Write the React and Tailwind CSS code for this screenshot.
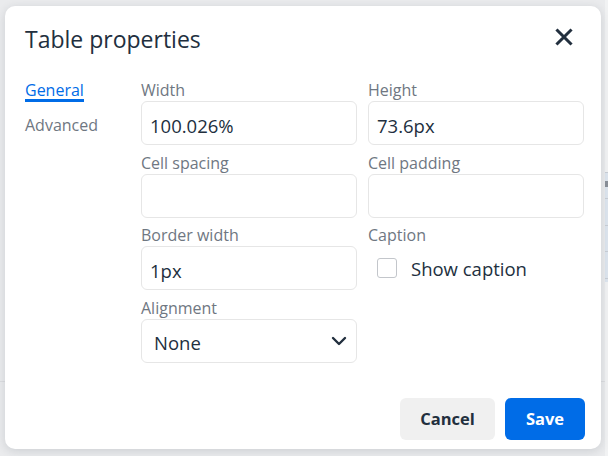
import React from 'react'

// Table properties dialog (TinyMCE-style) over a dimmed editor page.

const FONT = { fontFamily: '"Open Sans", "Noto Sans", Arial, sans-serif' }

function Field({ label, value }) {
  return (
    <div className="flex flex-col">
      <label className="text-[16px] leading-[21px] text-[#6f7782]">{label}</label>
      <div className="h-[44px] rounded-[6px] border border-[#e6e6e6] bg-white pl-[8px] pt-[5px] flex items-center text-[18.5px] text-[#222f3e]">
        {value}
      </div>
    </div>
  )
}

function CloseIcon() {
  return (
    <svg width="24" height="24" viewBox="0 0 24 24" fill="none">
      <path d="M5.5 5.5 18.5 18.5M18.5 5.5 5.5 18.5" stroke="#222f3e" strokeWidth="3" strokeLinecap="square" />
    </svg>
  )
}

function Chevron() {
  return (
    <svg width="16" height="10" viewBox="0 0 16 10" fill="none">
      <path d="M2 2 8 8 14 2" stroke="#222f3e" strokeWidth="2.4" strokeLinecap="round" strokeLinejoin="round" />
    </svg>
  )
}

function Backdrop() {
  // faint editor content peeking out behind the modal
  return (
    <div className="w-full h-full flex">
      <div className="w-[605px] h-full flex flex-col">
        <div className="h-[381px]" />
        <div className="h-px bg-[#dcdde0]" />
      </div>
      <div className="w-[3px] h-full flex flex-col bg-[#f1f2f3]">
        <div className="h-[172px]" />
        <div className="h-[110px] bg-[#dde5ee] flex flex-col">
          <div className="h-px bg-[#c9ced5]" />
          <div className="h-[8px]" />
          <div className="h-[6px] bg-[#8a9099]" />
          <div className="h-[11px]" />
          <div className="h-px bg-[#c9ced5]" />
          <div className="h-[26px]" />
          <div className="h-px bg-[#c9ced5]" />
          <div className="h-[25px]" />
          <div className="h-px bg-[#c9ced5]" />
          <div className="h-[26px]" />
          <div className="h-px bg-[#c9ced5]" />
        </div>
      </div>
    </div>
  )
}

export default function App() {
  return (
    <div className="relative w-[608px] h-[456px] overflow-hidden bg-[#eaebed]" style={FONT}>
      <Backdrop />

      <div className="absolute left-[5px] top-[6px] w-[596px] h-[443px] bg-white rounded-[10px] shadow-[0_2px_10px_rgba(34,47,62,0.15)] flex flex-col">
        {/* Header */}
        <div className="flex items-start justify-between pt-[18px] pl-5 pr-[25px]">
          <h1 className="text-[23px] leading-[30px] text-[#222f3e] font-normal">Table properties</h1>
          <button className="mt-px w-6 h-6 flex items-center justify-center">
            <CloseIcon />
          </button>
        </div>

        {/* Body */}
        <div className="flex pt-[26px] pl-5 pr-[17px]">
          <div className="w-[116px] flex flex-col items-start">
            <div className="mt-[0.5px] text-[16px] leading-[18px] text-[#006ce7] border-b-[3px] border-[#006ce7]">
              General
            </div>
            <div className="mt-[13px] text-[16px] leading-[21px] text-[#6f7782]">Advanced</div>
          </div>

          <div className="grid grid-cols-[216px_216px] gap-x-[11px] gap-y-[7.5px]">
            <Field label="Width" value="100.026%" />
            <Field label="Height" value="73.6px" />
            <Field label="Cell spacing" value="" />
            <Field label="Cell padding" value="" />
            <Field label="Border width" value="1px" />
            <div className="flex flex-col">
              <label className="text-[16px] leading-[21px] text-[#6f7782]">Caption</label>
              <div className="flex items-start pl-[9px] gap-[14px] mt-[9px]">
                <span className="mt-[3px] w-5 h-5 rounded-[3px] border border-[#c3c6cb] bg-white" />
                <span className="text-[18.5px] leading-[28px] text-[#222f3e]">Show caption</span>
              </div>
            </div>
            <div className="flex flex-col">
              <label className="text-[16px] leading-[21px] text-[#6f7782]">Alignment</label>
              <div className="h-[44px] rounded-[6px] border border-[#e6e6e6] bg-white pl-[12px] pr-[9px] pt-[4px] flex items-center justify-between text-[18.5px] text-[#222f3e]">
                <span>None</span>
                <span className="-mt-[4px]">
                  <Chevron />
                </span>
              </div>
            </div>
          </div>
        </div>

        {/* Footer */}
        <div className="mt-auto flex justify-end gap-[10px] pr-4 pb-[9px]">
          <button className="w-[95px] h-[42px] rounded-[6px] bg-[#f0f0f0] text-[16.5px] font-bold text-[#222f3e]">
            Cancel
          </button>
          <button className="w-[80px] h-[42px] rounded-[6px] bg-[#006ce7] text-[16.5px] font-bold text-white">
            Save
          </button>
        </div>
      </div>
    </div>
  )
}
